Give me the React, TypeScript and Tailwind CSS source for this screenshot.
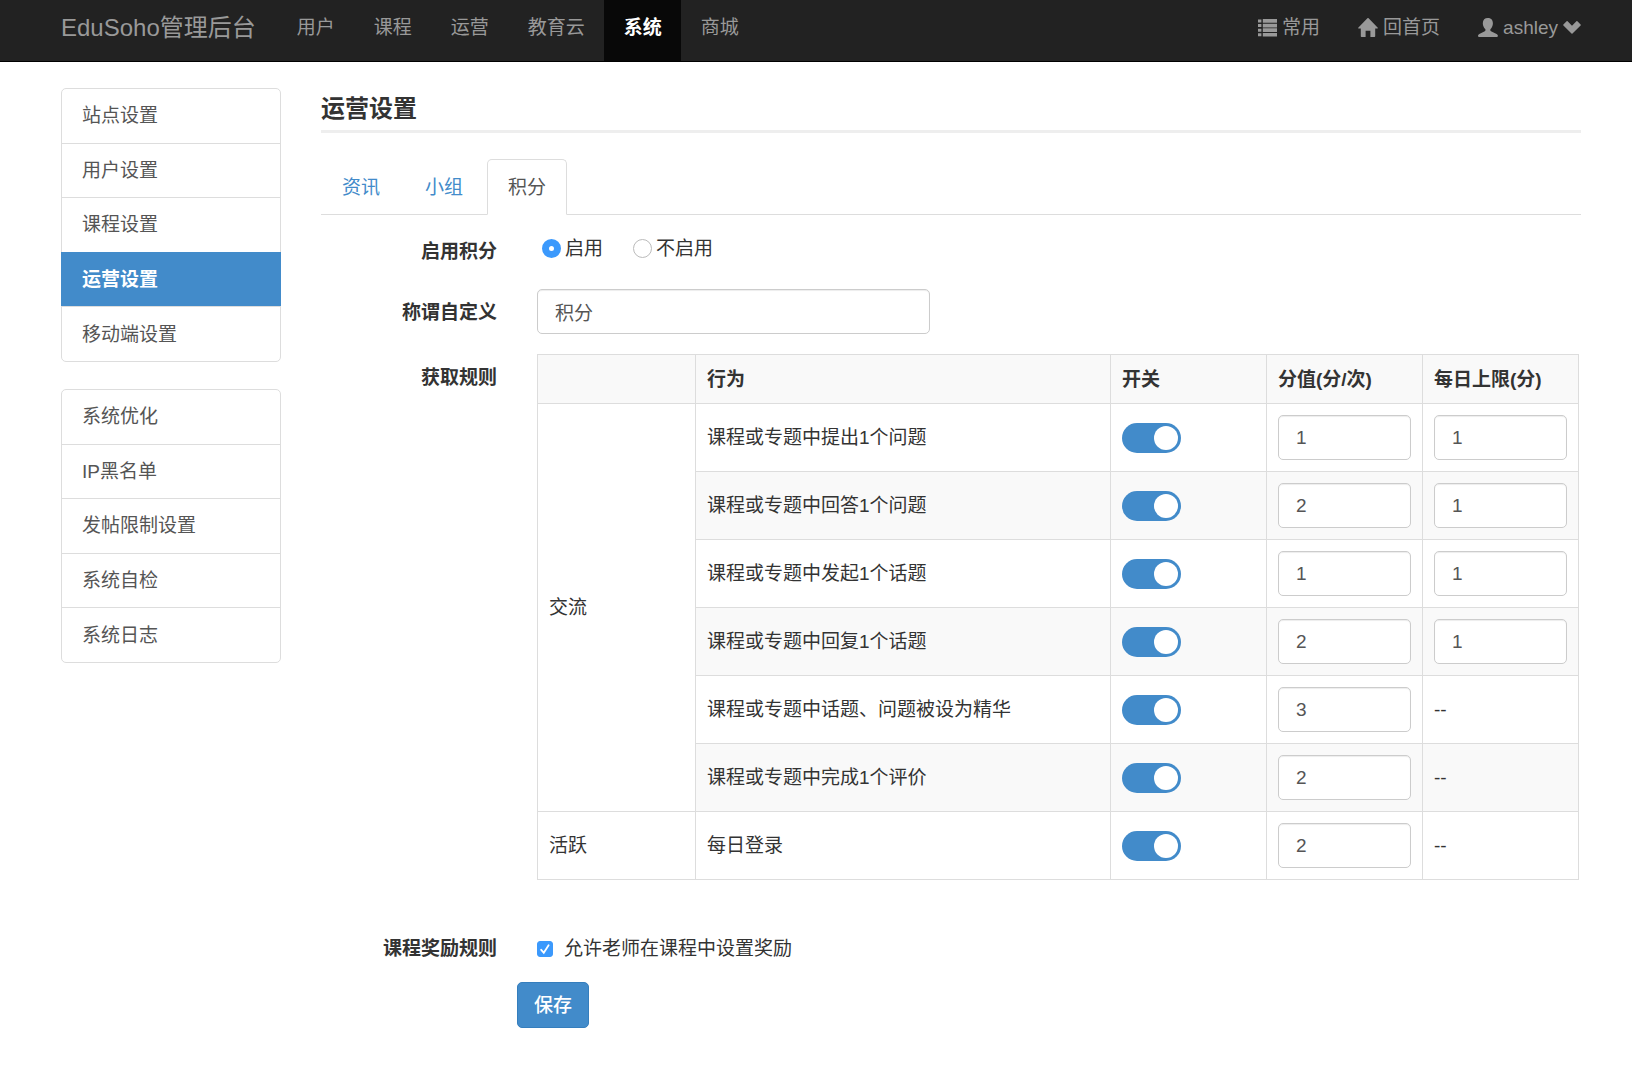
import React, { useState } from 'react';

interface Rule {
  id: string;
  action: string;
  score: string;
  limit?: string;
}

interface RuleGroup {
  name: string;
  rules: Rule[];
}

const NAV_ITEMS = ['用户', '课程', '运营', '教育云', '系统', '商城'];

const SIDE_GROUPS = [
  ['站点设置', '用户设置', '课程设置', '运营设置', '移动端设置'],
  ['系统优化', 'IP黑名单', '发帖限制设置', '系统自检', '系统日志'],
];

const TABS = ['资讯', '小组', '积分'];

const RULE_GROUPS: RuleGroup[] = [
  {
    name: '交流',
    rules: [
      { id: 'ask', action: '课程或专题中提出1个问题', score: '1', limit: '1' },
      { id: 'answer', action: '课程或专题中回答1个问题', score: '2', limit: '1' },
      { id: 'topic', action: '课程或专题中发起1个话题', score: '1', limit: '1' },
      { id: 'reply', action: '课程或专题中回复1个话题', score: '2', limit: '1' },
      { id: 'elite', action: '课程或专题中话题、问题被设为精华', score: '3' },
      { id: 'review', action: '课程或专题中完成1个评价', score: '2' },
    ],
  },
  {
    name: '活跃',
    rules: [{ id: 'login', action: '每日登录', score: '2' }],
  },
];

const inputClass =
  'h-[45px] rounded-[5px] border border-[#ccc] bg-white px-[17px] text-[#555] shadow-[inset_0_1px_1px_rgba(0,0,0,0.075)] outline-none focus:border-[#66afe9]';

const ListIcon = () => (
  <svg className="h-[18px] w-[19px]" viewBox="0 0 19 18" fill="currentColor" aria-hidden="true">
    <path d="M0 .5h3.4v3H0zM0 5.1h3.4v3H0zM0 9.7h3.4v3H0zM0 14.3h3.4v3H0zM4.8 0H19v3.7H4.8zM4.8 4.7H19v3.7H4.8zM4.8 9.3H19V13H4.8zM4.8 13.9H19v3.7H4.8z" />
  </svg>
);

const HomeIcon = () => (
  <svg className="h-[19px] w-5" viewBox="0 0 20 19" fill="currentColor" aria-hidden="true">
    <path d="M9.4.3a.8.8 0 0 1 1.2 0L19.8 9.8c.2.3.1.6-.3.6h-2.3v7.9c0 .4-.3.7-.7.7h-4.1v-6.3H7.6V19H3.5a.7.7 0 0 1-.7-.7v-7.9H.5c-.4 0-.5-.3-.3-.6z" />
  </svg>
);

const UserIcon = () => (
  <svg className="h-[19px] w-5" viewBox="0 0 20 19" fill="currentColor" aria-hidden="true">
    <path d="M9.8 0c3 0 5.1 1.8 5.1 5.2 0 2.4-1 4.6-2.3 5.9-.5.6-.4 1.7.4 2.1l5.6 2.7c1 .5 1.3 1.1 1.3 2.2 0 .5-.3.8-.8.8H.8c-.5 0-.8-.3-.8-.8 0-1.1.3-1.7 1.3-2.2l5.5-2.7c.8-.4.9-1.5.4-2.1C5.9 9.8 4.8 7.6 4.8 5.2 4.8 1.8 6.8 0 9.8 0z" />
  </svg>
);

const ChevronIcon = () => (
  <svg className="h-[13px] w-[18px]" viewBox="0 0 18 13" fill="currentColor" aria-hidden="true">
    <path d="M3.6.3a.7.7 0 0 1 1 0L9 4.7 13.4.3a.7.7 0 0 1 1 0l3.2 3.2a.7.7 0 0 1 0 1L9.5 12.6a.7.7 0 0 1-1 0L.4 4.5a.7.7 0 0 1 0-1z" />
  </svg>
);

const Header: React.FC = () => (
  <header className="flex items-start border-b border-black bg-[#222] pr-[51px] pl-[61px] leading-[27px] text-[#999]">
    <a href="#" className="pt-[14px] pb-5 text-[24px] whitespace-nowrap">
      EduSoho管理后台
    </a>
    <nav className="ml-[21px] flex whitespace-nowrap">
      {NAV_ITEMS.map(item => (
        <a
          key={item}
          href="#"
          className={`pt-[14px] pr-[19px] pb-5 pl-5 ${item === '系统' ? 'bg-[#080808] font-bold text-white' : 'hover:text-white'}`}
        >
          {item}
        </a>
      ))}
    </nav>
    <div className="ml-auto flex gap-[38px] pt-[14px] whitespace-nowrap">
      <a href="#" className="flex items-center gap-[5px] hover:text-white">
        <ListIcon />
        常用
      </a>
      <a href="#" className="flex items-center gap-[5px] hover:text-white">
        <HomeIcon />
        回首页
      </a>
      <button type="button" className="flex items-center gap-[5px] hover:text-white">
        <UserIcon />
        <span>ashley</span>
        <ChevronIcon />
      </button>
    </div>
  </header>
);

const SideMenu: React.FC<{ items: string[] }> = ({ items }) => (
  <ul className="flex min-h-[274px] flex-col divide-y divide-[#ddd] rounded-[5px] border border-[#ddd]">
    {items.map(item => (
      <li key={item} className="flex flex-1">
        <a
          href="#"
          className={`flex flex-1 items-center ${
            item === '运营设置' ? '-mx-px -mt-px bg-[#428bca] px-[21px] font-bold text-white' : 'px-5 text-[#555]'
          }`}
        >
          {item}
        </a>
      </li>
    ))}
  </ul>
);

const FormRow: React.FC<{ label: string; htmlFor?: string; children: React.ReactNode }> = ({ label, htmlFor, children }) => (
  <div className="flex gap-10">
    <label htmlFor={htmlFor} className="w-44 shrink-0 pt-[10px] text-right font-bold">
      {label}
    </label>
    <div className="min-w-0 flex-1">{children}</div>
  </div>
);

const RuleTable: React.FC = () => {
  const cell = 'border border-[#ddd] px-[11px]';

  return (
    <table className="w-full table-fixed border-collapse text-left">
      <colgroup>
        <col className="w-[158px]" />
        <col />
        <col className="w-[156px]" />
        <col className="w-[156px]" />
        <col className="w-[156px]" />
      </colgroup>
      <thead>
        <tr className="h-[49px] bg-[#f9f9f9]">
          <th className={cell}></th>
          <th className={cell}>行为</th>
          <th className={cell}>开关</th>
          <th className={cell}>分值(分/次)</th>
          <th className={cell}>每日上限(分)</th>
        </tr>
      </thead>
      <tbody>
        {RULE_GROUPS.map(group =>
          group.rules.map((rule, i) => (
            <tr key={rule.id} className="h-[68px]">
              {i === 0 && (
                <td rowSpan={group.rules.length} className={cell}>
                  {group.name}
                </td>
              )}
              <td className={`${cell} ${i % 2 ? 'bg-[#f9f9f9]' : ''}`}>{rule.action}</td>
              <td className={`${cell} ${i % 2 ? 'bg-[#f9f9f9]' : ''}`}>
                <input
                  type="checkbox"
                  role="switch"
                  defaultChecked
                  aria-label={rule.action}
                  className="flex h-[30px] w-[59px] cursor-pointer appearance-none items-center rounded-full bg-[#ccc] px-[3px] before:block before:size-6 before:rounded-full before:bg-white checked:justify-end checked:bg-[#428bca]"
                />
              </td>
              <td className={`${cell} ${i % 2 ? 'bg-[#f9f9f9]' : ''}`}>
                <input type="text" defaultValue={rule.score} aria-label={`${rule.action} 分值`} className={`${inputClass} block w-full`} />
              </td>
              <td className={`${cell} ${i % 2 ? 'bg-[#f9f9f9]' : ''}`}>
                {rule.limit ? (
                  <input type="text" defaultValue={rule.limit} aria-label={`${rule.action} 每日上限`} className={`${inputClass} block w-full`} />
                ) : (
                  '--'
                )}
              </td>
            </tr>
          ))
        )}
      </tbody>
    </table>
  );
};

const radioClass =
  'size-[19px] appearance-none rounded-full border border-[#bbb] bg-white checked:border-[7px] checked:border-[#3b99fc]';

export default function App() {
  const [enabled, setEnabled] = useState(true);

  return (
    <div className="min-h-screen bg-white font-['Liberation_Sans','Noto_Sans_CJK_SC',sans-serif] text-[19px] leading-[27px] text-[#333]">
      <Header />
      <div className="flex gap-10 pt-[26px] pr-[51px] pb-[54px] pl-[61px]">
        <aside className="flex w-[220px] shrink-0 flex-col gap-[27px]">
          {SIDE_GROUPS.map(items => (
            <SideMenu key={items[0]} items={items} />
          ))}
        </aside>

        <main className="min-w-0 flex-1">
          <h1 className="border-b-[3px] border-[#eee] text-[24px] leading-[42px] font-bold">运营设置</h1>

          <nav className="mt-[26px] flex gap-[3px] border-b border-[#ddd]">
            {TABS.map(tab => (
              <a
                key={tab}
                href="#"
                className={`-mb-px flex h-14 items-center rounded-t-[5px] border px-5 ${
                  tab === '积分' ? 'border-[#ddd] border-b-white bg-white text-[#555]' : 'border-transparent text-[#428bca]'
                }`}
              >
                {tab}
              </a>
            ))}
          </nav>

          <form className="flex flex-col gap-5 pt-[13px] pr-[2px]" onSubmit={e => e.preventDefault()}>
            <FormRow label="启用积分">
              <div className="flex h-[41px] items-center gap-[30px] pl-[5px]">
                <label className="flex items-center gap-1">
                  <input type="radio" name="enabled" checked={enabled} onChange={() => setEnabled(true)} className={radioClass} />
                  启用
                </label>
                <label className="flex items-center gap-1">
                  <input type="radio" name="enabled" checked={!enabled} onChange={() => setEnabled(false)} className={radioClass} />
                  不启用
                </label>
              </div>
            </FormRow>

            <FormRow label="称谓自定义" htmlFor="point-name">
              <input id="point-name" type="text" defaultValue="积分" className={`${inputClass} block w-[393px] max-w-full`} />
            </FormRow>

            <FormRow label="获取规则">
              <div className="pb-[25px]">
                <RuleTable />
              </div>
            </FormRow>

            <FormRow label="课程奖励规则" htmlFor="allow-reward">
              <label className="flex items-center gap-[11px] pt-[10px]">
                <span className="grid size-4">
                  <input
                    id="allow-reward"
                    type="checkbox"
                    defaultChecked
                    className="peer col-start-1 row-start-1 size-4 appearance-none rounded-[3px] border border-[#bbb] checked:border-[#3b99fc] checked:bg-[#3b99fc]"
                  />
                  <svg
                    className="pointer-events-none invisible col-start-1 row-start-1 size-4 peer-checked:visible"
                    viewBox="0 0 16 16"
                    fill="none"
                    stroke="#fff"
                    strokeWidth="1.8"
                    strokeLinecap="round"
                    aria-hidden="true"
                  >
                    <path d="M4.2 8.8l2.6 3L11.6 4.2" />
                  </svg>
                </span>
                允许老师在课程中设置奖励
              </label>
            </FormRow>

            <div className="pl-[196px]">
              <button type="submit" className="h-[46px] rounded-[5px] border border-[#357ebd] bg-[#428bca] px-4 font-medium text-white hover:bg-[#3276b1]">
                保存
              </button>
            </div>
          </form>
        </main>
      </div>
    </div>
  );
}
